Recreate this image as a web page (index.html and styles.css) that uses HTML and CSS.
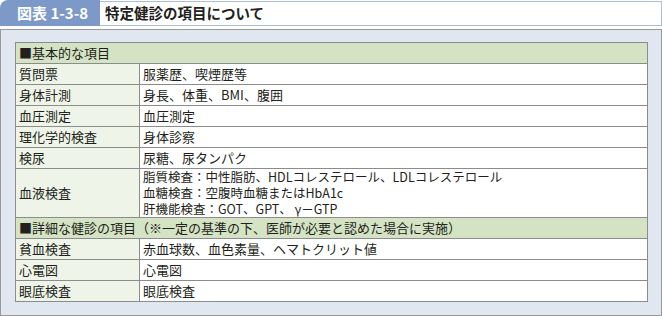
FILE: index.html
```html
<!DOCTYPE html>
<html lang="ja">
<head>
<meta charset="utf-8">
<link rel="stylesheet" href="styles.css">
</head>
<body>
<div class="header">
  <div class="label">図表 1-3-8</div>
  <div class="title">特定健診の項目について</div>
</div>
<div class="panel">
  <table class="items">
    <tr class="group"><td colspan="2">■基本的な項目</td></tr>
    <tr><th>質問票</th><td>服薬歴、喫煙歴等</td></tr>
    <tr><th>身体計測</th><td>身長、体重、BMI、腹囲</td></tr>
    <tr><th>血圧測定</th><td>血圧測定</td></tr>
    <tr><th>理化学的検査</th><td>身体診察</td></tr>
    <tr><th>検尿</th><td>尿糖、尿タンパク</td></tr>
    <tr class="multi"><th>血液検査</th><td><span class="line">脂質検査：中性脂肪、HDLコレステロール、LDLコレステロール</span><span class="line">血糖検査：空腹時血糖またはHbA1c</span><span class="line">肝機能検査：GOT、GPT、 γ－GTP</span></td></tr>
    <tr class="group"><td colspan="2">■詳細な健診の項目（※一定の基準の下、医師が必要と認めた場合に実施）</td></tr>
    <tr><th>貧血検査</th><td>赤血球数、血色素量、ヘマトクリット値</td></tr>
    <tr><th>心電図</th><td>心電図</td></tr>
    <tr><th>眼底検査</th><td>眼底検査</td></tr>
  </table>
</div>
</body>
</html>
```

FILE: styles.css
```css
html, body {
  margin: 0;
  padding: 0;
  background: #ffffff;
}
body {
  width: 662px;
  font-family: "Noto Sans CJK JP", "Noto Sans", sans-serif;
  color: #231f20;
}
.header {
  display: flex;
  height: 26px;
}
.label {
  width: 100px;
  box-sizing: border-box;
  background: #7d99c8;
  color: #ffffff;
  font-weight: bold;
  font-size: 15px;
  line-height: 26px;
  padding-left: 17px;
  border-top-left-radius: 8px;
}
.title {
  flex: 1;
  margin-top: 1px;
  height: 25px;
  box-sizing: border-box;
  border: 1px solid #a9bedb;
  border-left: none;
  font-weight: bold;
  font-size: 14.5px;
  line-height: 22px;
  padding-left: 5px;
  color: #231f20;
}
.panel {
  margin-top: 3px;
  height: 287px;
  box-sizing: border-box;
  border: 1px solid #999999;
  background: #e1e7f0;
  padding: 12px 13px 0 14px;
}
.items {
  width: 633px;
  border-collapse: collapse;
  font-size: 13px;
  line-height: 20px;
}
.items th, .items td {
  border: 1px solid #8c8c8c;
  padding: 0 3px;
  text-align: left;
  font-weight: normal;
  vertical-align: middle;
  white-space: nowrap;
}
.items th {
  width: 117px;
  background: #eef5e8;
}
.items td {
  background: #ffffff;
}
.items .group td {
  background: #d3e3c3;
}
.items .line {
  display: block;
  height: 16px;
  line-height: 16px;
  font-size: 12.5px;
}
```
